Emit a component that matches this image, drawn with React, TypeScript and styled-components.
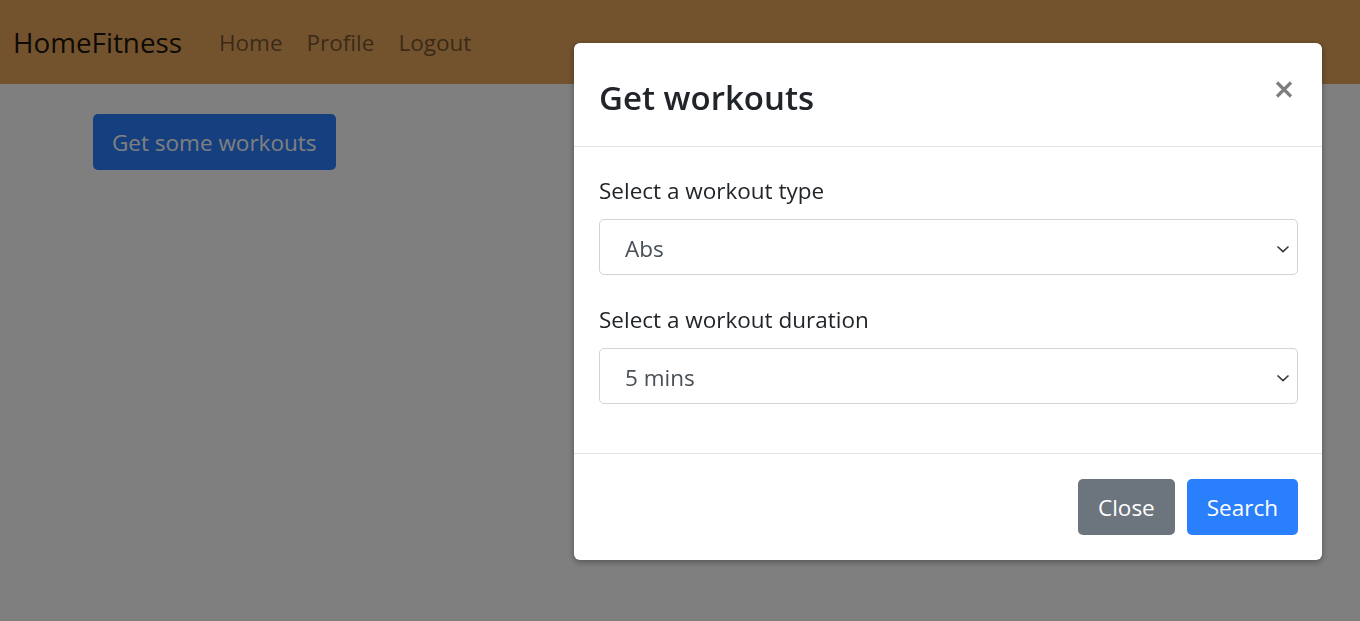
import styled, { createGlobalStyle } from "styled-components";

const GlobalStyle = createGlobalStyle`
  html, body {
    margin: 0;
    padding: 0;
    background: #ffffff;
    font-family: "Open Sans", "Noto Sans", sans-serif;
    color: #212529;
  }
`;

const Page = styled.div`
  min-height: 621px;
  background: #ffffff;
`;

const Navbar = styled.nav`
  display: flex;
  align-items: center;
  height: 84px;
  padding: 0 13px;
  background: #e6a45c;
  box-sizing: border-box;
`;

const Brand = styled.a`
  font-size: 27.8px;
  color: rgba(0, 0, 0, 0.9);
  text-decoration: none;
  white-space: nowrap;
`;

const NavLinks = styled.div`
  display: flex;
  margin-left: 25px;
`;

const NavLink = styled.a`
  padding: 0 12px;
  font-size: 22.5px;
  color: rgba(0, 0, 0, 0.5);
  text-decoration: none;
`;

const Content = styled.main`
  padding: 30px 93px;
`;

const Button = styled.button<{ $variant?: "primary" | "secondary" }>`
  height: 56px;
  padding: 0 19px;
  border: none;
  border-radius: 5px;
  font-family: inherit;
  font-size: 22.5px;
  color: #ffffff;
  background: ${(p) => (p.$variant === "secondary" ? "#6c757d" : "#2a7ffd")};
  cursor: pointer;
`;

const FooterButton = styled(Button)`
  padding: 0 20px;
`;

const Backdrop = styled.div`
  position: fixed;
  inset: 0;
  background: rgba(0, 0, 0, 0.5);
`;

const Modal = styled.div`
  position: fixed;
  top: 43px;
  left: 574px;
  width: 748px;
  background: #ffffff;
  border-radius: 6px;
  box-shadow: 0 2px 6px rgba(0, 0, 0, 0.35);
  display: flex;
  flex-direction: column;
`;

const ModalHeader = styled.div`
  display: flex;
  align-items: center;
  justify-content: space-between;
  padding: 32px 25px 26px;
  border-bottom: 1px solid #dee2e6;
`;

const ModalTitle = styled.h4`
  margin: 0;
  font-size: 33px;
  font-weight: 600;
  line-height: 45px;
  color: #212529;
`;

const CloseX = styled.button`
  display: flex;
  border: none;
  background: none;
  padding: 0;
  margin: -16px 4px 0 0;
  opacity: 0.5;
  cursor: pointer;
`;

const ModalBody = styled.div`
  display: flex;
  flex-direction: column;
  gap: 30px;
  padding: 29px 24px 49px 25px;
  border-bottom: 1px solid #dee2e6;
`;

const FormGroup = styled.div`
  display: flex;
  flex-direction: column;
  gap: 13px;
`;

const Label = styled.label`
  font-size: 22.5px;
  line-height: 30px;
  color: #212529;
`;

const SelectBox = styled.div`
  display: flex;
  align-items: center;
  justify-content: space-between;
  height: 56px;
  padding: 3px 7px 0 25px;
  border: 1px solid #ced4da;
  border-radius: 5px;
  box-sizing: border-box;
  font-size: 22.5px;
  color: #495057;
`;

const ModalFooter = styled.div`
  display: flex;
  justify-content: flex-end;
  gap: 12px;
  padding: 25px 24px 25px 25px;
`;

function Chevron() {
  return (
    <svg width="14" height="8" viewBox="0 0 14 8" fill="none">
      <path d="M1.5 1.5l5.5 5.2 5.5-5.2" stroke="#343a40" strokeWidth="1.6" />
    </svg>
  );
}

function CloseIcon() {
  return (
    <svg width="18" height="17" viewBox="0 0 18 17">
      <path d="M2 1.5l14 14M16 1.5l-14 14" stroke="#000" strokeWidth="3.2" />
    </svg>
  );
}

function Select({ value }: { value: string }) {
  return (
    <SelectBox>
      <span>{value}</span>
      <Chevron />
    </SelectBox>
  );
}

export default function App() {
  return (
    <Page>
      <GlobalStyle />
      <Navbar>
        <Brand>HomeFitness</Brand>
        <NavLinks>
          <NavLink>Home</NavLink>
          <NavLink>Profile</NavLink>
          <NavLink>Logout</NavLink>
        </NavLinks>
      </Navbar>
      <Content>
        <Button>Get some workouts</Button>
      </Content>
      <Backdrop />
      <Modal>
        <ModalHeader>
          <ModalTitle>Get workouts</ModalTitle>
          <CloseX aria-label="Close">
            <CloseIcon />
          </CloseX>
        </ModalHeader>
        <ModalBody>
          <FormGroup>
            <Label>Select a workout type</Label>
            <Select value="Abs" />
          </FormGroup>
          <FormGroup>
            <Label>Select a workout duration</Label>
            <Select value="5 mins" />
          </FormGroup>
        </ModalBody>
        <ModalFooter>
          <FooterButton $variant="secondary">Close</FooterButton>
          <FooterButton>Search</FooterButton>
        </ModalFooter>
      </Modal>
    </Page>
  );
}
